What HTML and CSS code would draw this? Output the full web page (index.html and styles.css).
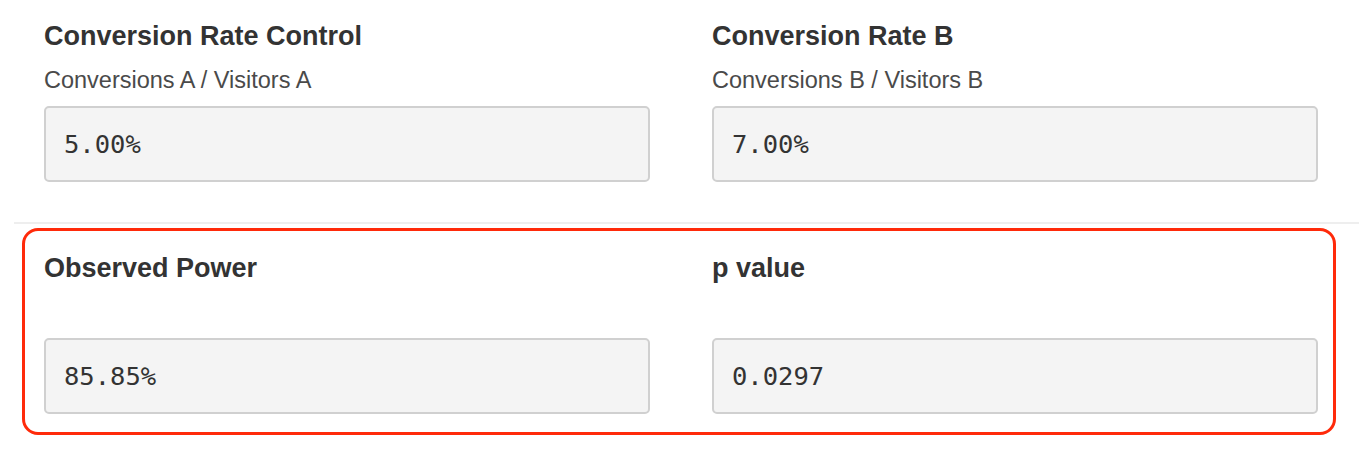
FILE: index.html
```html
<!DOCTYPE html>
<html lang="en">
<head>
<meta charset="UTF-8" />
<meta name="viewport" content="width=device-width, initial-scale=1" />
<title>A/B Test Significance</title>
<link rel="stylesheet" href="styles.css">
</head>
<body>

<main>
  <section class="row inputs">
    <div class="field">
      <h3>Conversion Rate Control</h3>
      <p class="hint">Conversions A / Visitors A</p>
      <div class="value">5.00%</div>
    </div>
    <div class="field">
      <h3>Conversion Rate B</h3>
      <p class="hint">Conversions B / Visitors B</p>
      <div class="value">7.00%</div>
    </div>
  </section>

  <hr class="divider">

  <section class="row results">
    <div class="field">
      <h3>Observed Power</h3>
      <p class="hint"></p>
      <div class="value">85.85%</div>
    </div>
    <div class="field">
      <h3>p value</h3>
      <p class="hint"></p>
      <div class="value">0.0297</div>
    </div>
  </section>
</main>

</body>
</html>
```

FILE: styles.css
```css
body { margin: 0; background: #fff; color: #333; font-family: "Liberation Sans", Arial, sans-serif; }

.row {
  display: grid; grid-template-columns: 606px 606px; column-gap: 62px;
}
.inputs { padding: 21px 0 0 44px; }

.field h3 {
  margin: 0; font-size: 27px; line-height: 30px; font-weight: bold; color: #333;
}
.hint {
  margin: 16px 0 0; height: 26px; font-size: 23.5px; line-height: 26px; color: #4a4a4a;
}
.value {
  box-sizing: border-box; height: 76px; margin-top: 13px; padding: 0 18px;
  display: flex; align-items: center;
  background: #f4f4f4; border: 2px solid #d0d0d0; border-radius: 5px;
  font-family: "DejaVu Sans Mono", "Liberation Mono", monospace; font-size: 25.5px; color: #333;
}

.divider {
  margin: 40px 0 0 14px; border: none; height: 2px; background: #eeeeee;
}

.results {
  box-sizing: border-box; width: 1314px; margin: 4px 0 0 22px;
  padding: 22px 0 18px 19px;
  border: 3px solid #ff2a0a; border-radius: 16px;
}
```
